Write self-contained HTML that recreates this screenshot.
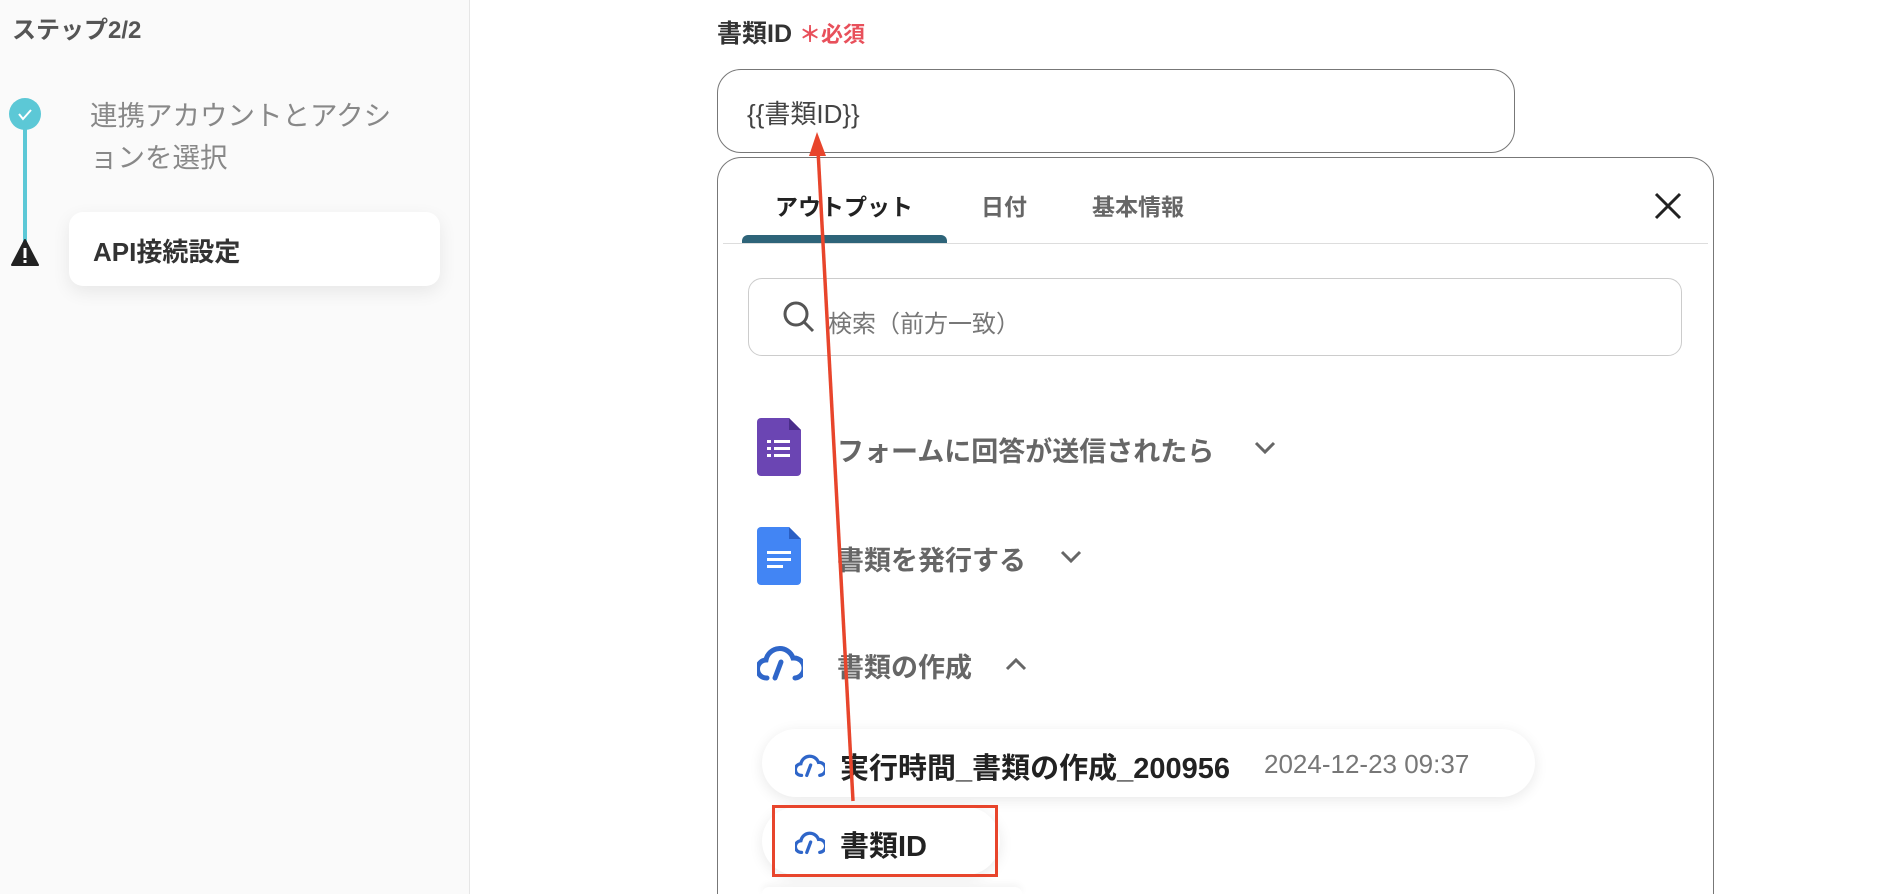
<!DOCTYPE html>
<html><head><meta charset="utf-8"><style>
*{margin:0;padding:0;box-sizing:border-box}
html,body{width:1890px;height:894px;overflow:hidden}
body{background:#fff;font-family:"Liberation Sans","Noto Sans CJK JP",sans-serif}
#w{position:relative;width:1890px;height:894px;overflow:hidden}
.a{position:absolute;white-space:nowrap}
</style></head><body><div id="w">
<div class="a" style="left:0;top:0;width:470px;height:894px;background:#fafafa;border-right:1px solid #e6e6e6"></div>
<div class="a" style="left:12px;top:10px;font-size:24px;font-weight:bold;color:#555">ステップ2/2</div>
<div class="a" style="left:23px;top:128px;width:4px;height:116px;background:#5cc8d6"></div>
<svg class="a" style="left:9px;top:98px" width="32" height="32"><circle cx="16" cy="16" r="16" fill="#5cc8d6"/><path d="M10 16l4 5 8-9" stroke="#fff" stroke-width="2" fill="none"/></svg>
<svg class="a" style="left:10px;top:238px" width="30" height="30"><path d="M15 2L28 27H2Z" fill="#222" stroke="#222" stroke-width="2" stroke-linejoin="round"/><rect x="13.5" y="10" width="3" height="10" fill="#fff"/><rect x="13.5" y="22" width="3" height="3" fill="#fff"/></svg>
<div class="a" style="left:90px;top:95px;font-size:27.5px;color:#888;line-height:42px">連携アカウントとアクシ<br>ョンを選択</div>
<div class="a" style="left:69px;top:212px;width:371px;height:74px;background:#fff;border-radius:14px;box-shadow:0 6px 18px rgba(0,0,0,.08)"></div>
<div class="a" style="left:93px;top:232px;font-size:26px;font-weight:bold;color:#333">API接続設定</div>

<div class="a" style="left:717px;top:14px;font-size:25px;font-weight:bold;color:#333">書類ID <span style="color:#e8505b;font-size:22px">＊必須</span></div>
<div class="a" style="left:717px;top:69px;width:798px;height:84px;border:1.5px solid #777;border-radius:24px"></div>
<div class="a" style="left:747px;top:94px;font-size:26px;color:#444">{{書類ID}}</div>
<div class="a" style="left:717px;top:157px;width:997px;height:737px;border:1.5px solid #777;border-bottom:none;border-radius:24px 24px 0 0"></div>
<div class="a" style="left:775px;top:188px;font-size:23px;font-weight:bold;color:#222">アウトプット</div>
<div class="a" style="left:981px;top:188px;font-size:23px;font-weight:bold;color:#666">日付</div>
<div class="a" style="left:1092px;top:188px;font-size:23px;font-weight:bold;color:#666">基本情報</div>
<div class="a" style="left:742px;top:235px;width:205px;height:8px;background:#2e6479;border-radius:6px 6px 0 0"></div>
<div class="a" style="left:723px;top:243px;width:985px;height:1px;background:#ddd"></div>
<svg class="a" style="left:1653px;top:191px" width="30" height="30"><path d="M3 3L27 27M27 3L3 27" stroke="#222" stroke-width="3"/></svg>
<div class="a" style="left:748px;top:278px;width:934px;height:78px;border:1.5px solid #ccc;border-radius:14px"></div>
<svg class="a" style="left:782px;top:300px" width="34" height="34"><circle cx="14" cy="14" r="11" stroke="#555" stroke-width="3" fill="none"/><path d="M22 22l9 9" stroke="#555" stroke-width="3"/></svg>
<div class="a" style="left:828px;top:304px;font-size:24px;color:#777">検索（前方一致）</div>

<svg class="a" style="left:757px;top:418px" width="44" height="58"><path d="M4 0H32L44 12V54a4 4 0 0 1-4 4H4a4 4 0 0 1-4-4V4a4 4 0 0 1 4-4Z" fill="#6b45b3"/><path d="M32 0V12H44Z" fill="#4a2e8a"/><g fill="#fff"><rect x="10" y="22" width="4" height="3"/><rect x="17" y="22" width="16" height="3"/><rect x="10" y="29" width="4" height="3"/><rect x="17" y="29" width="16" height="3"/><rect x="10" y="36" width="4" height="3"/><rect x="17" y="36" width="16" height="3"/></g></svg>
<div class="a" style="left:837px;top:430px;font-size:27px;font-weight:bold;color:#666">フォームに回答が送信されたら</div>
<svg class="a" style="left:1254px;top:440px" width="22" height="16"><path d="M2 3l9 9 9-9" stroke="#666" stroke-width="3" fill="none"/></svg>
<svg class="a" style="left:757px;top:527px" width="44" height="58"><path d="M4 0H32L44 12V54a4 4 0 0 1-4 4H4a4 4 0 0 1-4-4V4a4 4 0 0 1 4-4Z" fill="#4285f4"/><path d="M32 0V12H44Z" fill="#2a5fc4"/><g fill="#fff"><rect x="10" y="24" width="24" height="3"/><rect x="10" y="31" width="24" height="3"/><rect x="10" y="38" width="16" height="3"/></g></svg>
<div class="a" style="left:837px;top:539px;font-size:27px;font-weight:bold;color:#666">書類を発行する</div>
<svg class="a" style="left:1060px;top:549px" width="22" height="16"><path d="M2 3l9 9 9-9" stroke="#666" stroke-width="3" fill="none"/></svg>
<svg class="a" style="left:757px;top:642px" width="46" height="40" viewBox="0 0 46 40"><path d="M10 36a9 9 0 0 1-1-18 14 14 0 0 1 27-2 10 10 0 0 1 2 20" stroke="#2f66c9" stroke-width="5" fill="none" stroke-linecap="round"/><path d="M24 20l-6 16" stroke="#2f66c9" stroke-width="5" stroke-linecap="round"/></svg>
<div class="a" style="left:837px;top:646px;font-size:27px;font-weight:bold;color:#666">書類の作成</div>
<svg class="a" style="left:1005px;top:656px" width="22" height="16"><path d="M2 13l9-9 9 9" stroke="#666" stroke-width="3" fill="none"/></svg>

<div class="a" style="left:762px;top:729px;width:773px;height:68px;background:#fff;border-radius:34px;box-shadow:0 3px 14px rgba(0,0,0,.09)"></div>
<svg class="a" style="left:795px;top:752px" width="30" height="26" viewBox="0 0 46 40"><path d="M10 36a9 9 0 0 1-1-18 14 14 0 0 1 27-2 10 10 0 0 1 2 20" stroke="#2f66c9" stroke-width="5" fill="none" stroke-linecap="round"/><path d="M24 20l-6 16" stroke="#2f66c9" stroke-width="5" stroke-linecap="round"/></svg>
<div class="a" style="left:840px;top:745px;font-size:29px;font-weight:bold;color:#222">実行時間_書類の作成_200956</div>
<div class="a" style="left:1264px;top:749px;font-size:26px;color:#777">2024-12-23 09:37</div>
<div class="a" style="left:762px;top:807px;width:238px;height:68px;background:#fff;border-radius:34px;box-shadow:0 3px 14px rgba(0,0,0,.09)"></div>
<div class="a" style="left:762px;top:887px;width:260px;height:7px;background:#fff;border-radius:7px 7px 0 0;box-shadow:0 -2px 8px rgba(0,0,0,.06)"></div>
<svg class="a" style="left:795px;top:829px" width="30" height="26" viewBox="0 0 46 40"><path d="M10 36a9 9 0 0 1-1-18 14 14 0 0 1 27-2 10 10 0 0 1 2 20" stroke="#2f66c9" stroke-width="5" fill="none" stroke-linecap="round"/><path d="M24 20l-6 16" stroke="#2f66c9" stroke-width="5" stroke-linecap="round"/></svg>
<div class="a" style="left:840px;top:823px;font-size:29px;font-weight:bold;color:#222">書類ID</div>
<div class="a" style="left:772px;top:805px;width:226px;height:72px;border:3.5px solid #e8452c"></div>
<svg class="a" style="left:0;top:0" width="1890" height="894"><path d="M853 801L818 150" stroke="#e8452c" stroke-width="3.5"/><path d="M817 132L809 156H826Z" fill="#e8452c"/></svg>
</div></body></html>
